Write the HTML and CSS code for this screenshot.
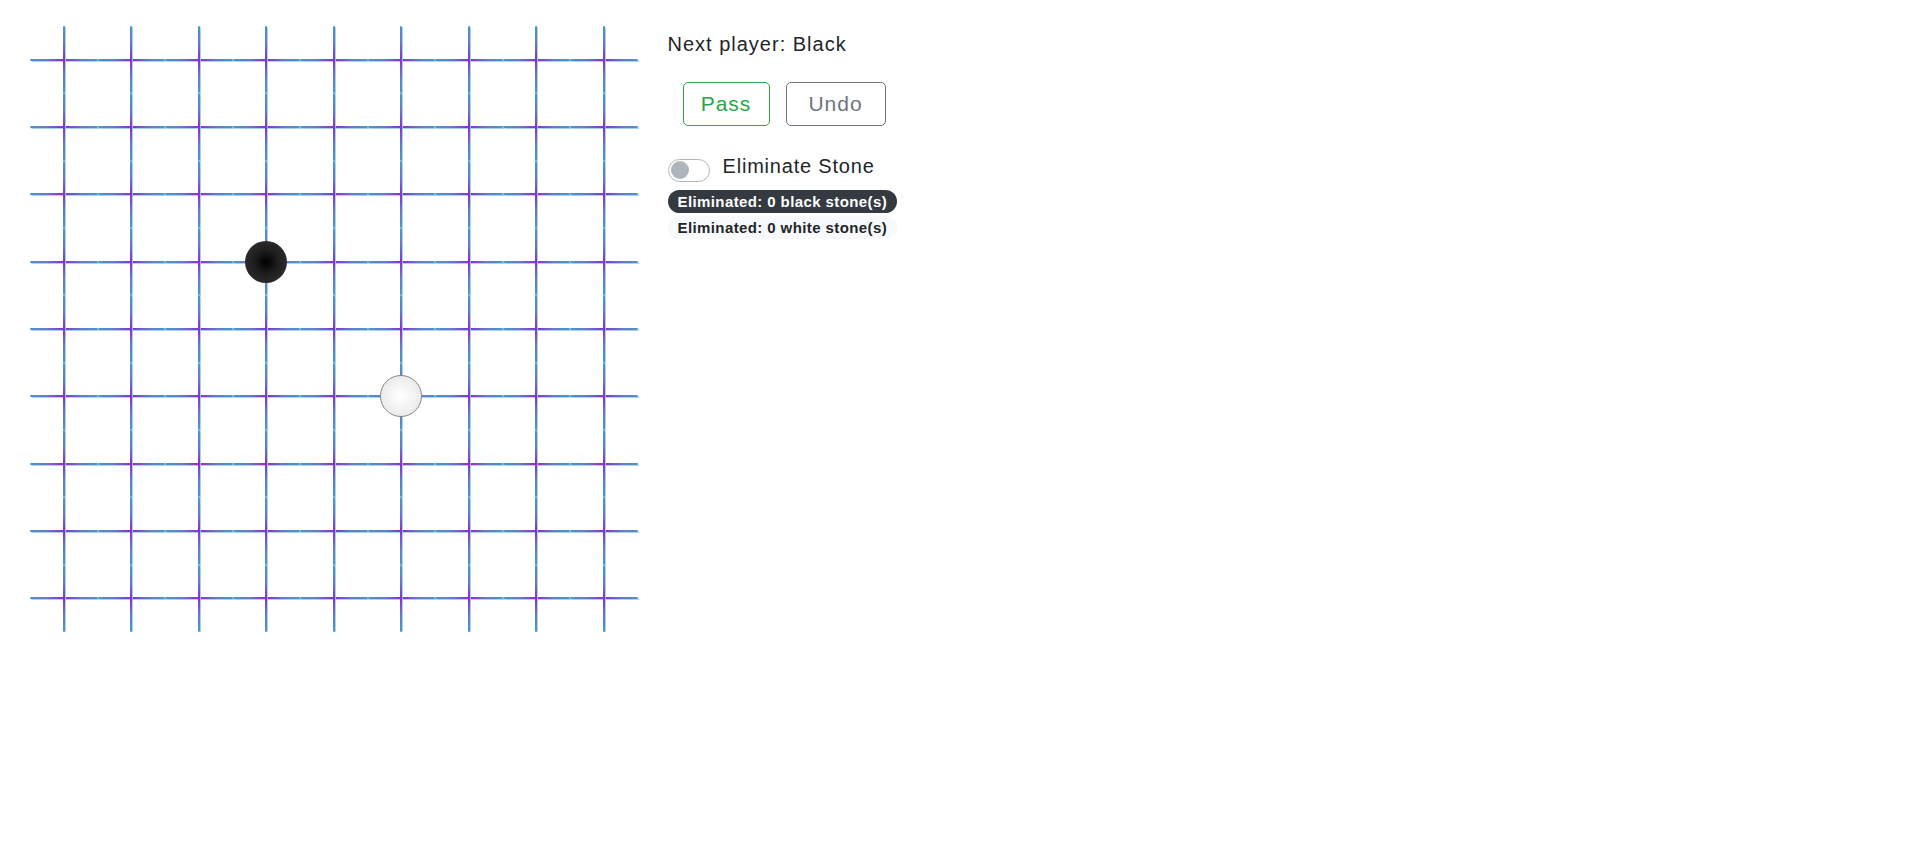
FILE: index.html
```html
<!DOCTYPE html>
<html>
<head>
<meta charset="utf-8">
<link rel="stylesheet" href="styles.css">
</head>
<body>
<div class="app">
  <div class="board" id="board"></div>
  <div class="panel">
    <div class="status">Next player: Black</div>
    <div class="actions">
      <button class="btn btn-pass">Pass</button>
      <button class="btn btn-undo">Undo</button>
    </div>
    <label class="switch-row">
      <span class="switch"><span class="knob"></span></span>
      <span class="switch-label">Eliminate Stone</span>
    </label>
    <div class="badges">
      <span class="badge badge-dark">Eliminated: 0 black stone(s)</span>
      <span class="badge badge-light">Eliminated: 0 white stone(s)</span>
    </div>
  </div>
</div>
<script src="script.js"></script>
</body>
</html>
```

FILE: script.js
```js
(function () {
  var board = document.getElementById('board');
  var stones = { '3,3': 'black', '5,5': 'white' };
  for (var r = 0; r < 9; r++) {
    for (var c = 0; c < 9; c++) {
      var cell = document.createElement('div');
      cell.className = 'cell';
      var s = stones[r + ',' + c];
      if (s) {
        var st = document.createElement('div');
        st.className = 'stone stone-' + s;
        cell.appendChild(st);
      }
      board.appendChild(cell);
    }
  }
})();
```

FILE: styles.css
```css
html, body {
  margin: 0;
  padding: 0;
  background: #fff;
}
body {
  font-family: "Century Gothic", "Liberation Sans", Arial, sans-serif;
  color: #212529;
}
.app {
  display: flex;
  align-items: flex-start;
  padding: 26px 0 0 30px;
}
.board {
  display: grid;
  grid-template-columns: repeat(9, 67.5px);
  grid-template-rows: repeat(9, 67.35px);
}
.cell {
  position: relative;
  display: flex;
  align-items: center;
  justify-content: center;
}
.cell::before,
.cell::after {
  content: "";
  position: absolute;
  box-shadow: 0 0 1px 0.5px rgba(150, 205, 235, 0.85);
}
.cell::before {
  left: 0;
  right: 0;
  top: calc(50% - 1px);
  height: 2px;
  background: linear-gradient(to right, #8ccbe0 0, #4f95c4 2%, #6a78c8 25%, #8a2fc9 50%, #6a78c8 75%, #4f95c4 98%, #8ccbe0 100%);
}
.cell::after {
  top: 0;
  bottom: 0;
  left: calc(50% - 1px);
  width: 2px;
  background: linear-gradient(to bottom, #8ccbe0 0, #4f95c4 2%, #6a78c8 25%, #8a2fc9 50%, #6a78c8 75%, #4f95c4 98%, #8ccbe0 100%);
}
.stone {
  position: relative;
  z-index: 1;
  width: 42px;
  height: 42px;
  border-radius: 50%;
  box-sizing: border-box;
}
.stone-black {
  background: radial-gradient(circle at 50% 50%, #000 0, #1e1e1e 40%, #363636 100%);
}
.stone-white {
  border: 1px solid #888;
  background: radial-gradient(circle at 50% 50%, #fff 0, #f3f3f3 45%, #e2e2e2 100%);
}
.panel {
  margin-left: 30px;
  padding-top: 3px;
}
.status {
  font-size: 20px;
  line-height: 30px;
  letter-spacing: 1px;
}
.actions {
  display: flex;
  gap: 16px;
  margin: 23px 0 0 15px;
}
.btn {
  font-family: inherit;
  font-size: 21px;
  letter-spacing: 1px;
  line-height: 28px;
  height: 44px;
  padding: 0;
  background: #fff;
  border-radius: 5px;
  box-sizing: border-box;
  cursor: pointer;
}
.btn-pass {
  width: 87px;
  color: #28a745;
  border: 1px solid #28a745;
}
.btn-undo {
  width: 100px;
  color: #6c757d;
  border: 1px solid #6c757d;
}
.switch-row {
  display: flex;
  align-items: center;
  margin-top: 25px;
  height: 30px;
}
.switch {
  display: flex;
  align-items: center;
  width: 42px;
  height: 23px;
  box-sizing: border-box;
  border: 1px solid #adb5bd;
  border-radius: 12px;
  padding-left: 2px;
  margin-top: 8px;
}
.knob {
  width: 18px;
  height: 18px;
  border-radius: 50%;
  background: #adb5bd;
}
.switch-label {
  margin-left: 13px;
  font-size: 20px;
  line-height: 30px;
  letter-spacing: 0.8px;
}
.badges {
  display: flex;
  flex-direction: column;
  align-items: flex-start;
  gap: 3px;
  margin-top: 9px;
}
.badge {
  display: inline-block;
  font-size: 15px;
  font-weight: 700;
  letter-spacing: 0.4px;
  line-height: 23px;
  height: 23px;
  padding: 0 10px;
  border-radius: 12px;
  white-space: nowrap;
}
.badge-dark {
  background: #343a40;
  color: #fff;
}
.badge-light {
  background: #f8f9fa;
  color: #212529;
}
```
